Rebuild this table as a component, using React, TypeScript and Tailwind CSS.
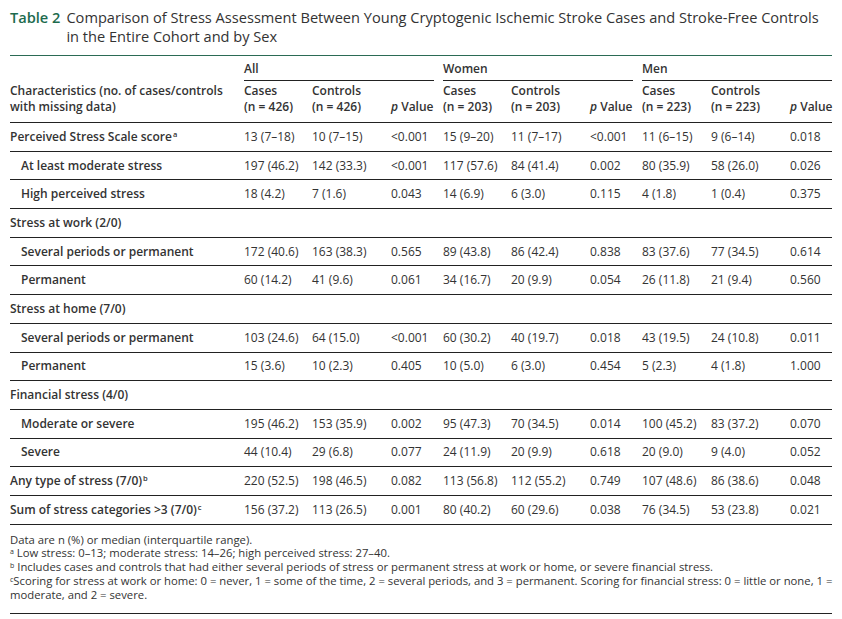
const cols = 'grid grid-cols-[234px_68px_79px_52px_68px_79px_52px_69px_79px_42px]';

type Row = {
  label: string;
  sup?: string;
  indent?: boolean;
  vals?: string[];
};

const rows: Row[] = [
  { label: 'Perceived Stress Scale score', sup: 'a', vals: ['13 (7–18)', '10 (7–15)', '<0.001', '15 (9–20)', '11 (7–17)', '<0.001', '11 (6–15)', '9 (6–14)', '0.018'] },
  { label: 'At least moderate stress', indent: true, vals: ['197 (46.2)', '142 (33.3)', '<0.001', '117 (57.6)', '84 (41.4)', '0.002', '80 (35.9)', '58 (26.0)', '0.026'] },
  { label: 'High perceived stress', indent: true, vals: ['18 (4.2)', '7 (1.6)', '0.043', '14 (6.9)', '6 (3.0)', '0.115', '4 (1.8)', '1 (0.4)', '0.375'] },
  { label: 'Stress at work (2/0)' },
  { label: 'Several periods or permanent', indent: true, vals: ['172 (40.6)', '163 (38.3)', '0.565', '89 (43.8)', '86 (42.4)', '0.838', '83 (37.6)', '77 (34.5)', '0.614'] },
  { label: 'Permanent', indent: true, vals: ['60 (14.2)', '41 (9.6)', '0.061', '34 (16.7)', '20 (9.9)', '0.054', '26 (11.8)', '21 (9.4)', '0.560'] },
  { label: 'Stress at home (7/0)' },
  { label: 'Several periods or permanent', indent: true, vals: ['103 (24.6)', '64 (15.0)', '<0.001', '60 (30.2)', '40 (19.7)', '0.018', '43 (19.5)', '24 (10.8)', '0.011'] },
  { label: 'Permanent', indent: true, vals: ['15 (3.6)', '10 (2.3)', '0.405', '10 (5.0)', '6 (3.0)', '0.454', '5 (2.3)', '4 (1.8)', '1.000'] },
  { label: 'Financial stress (4/0)' },
  { label: 'Moderate or severe', indent: true, vals: ['195 (46.2)', '153 (35.9)', '0.002', '95 (47.3)', '70 (34.5)', '0.014', '100 (45.2)', '83 (37.2)', '0.070'] },
  { label: 'Severe', indent: true, vals: ['44 (10.4)', '29 (6.8)', '0.077', '24 (11.9)', '20 (9.9)', '0.618', '20 (9.0)', '9 (4.0)', '0.052'] },
  { label: 'Any type of stress (7/0)', sup: 'b', vals: ['220 (52.5)', '198 (46.5)', '0.082', '113 (56.8)', '112 (55.2)', '0.749', '107 (48.6)', '86 (38.6)', '0.048'] },
  { label: 'Sum of stress categories >3 (7/0)', sup: 'c', vals: ['156 (37.2)', '113 (26.5)', '0.001', '80 (40.2)', '60 (29.6)', '0.038', '76 (34.5)', '53 (23.8)', '0.021'] },
];

function GroupHead({ name, last }: { name: string; last?: boolean }) {
  return (
    <div className={last ? 'col-span-3' : 'col-span-3 pr-[9px]'}>
      <div className="border-b border-[#222] pb-[3px] leading-[16px] font-semibold">{name}</div>
    </div>
  );
}

function SubHead({ n }: { n: string }) {
  return (
    <>
      <div className="font-semibold leading-[16px] whitespace-nowrap">
        Cases
        <br />({n})
      </div>
      <div className="font-semibold leading-[16px] whitespace-nowrap">
        Controls
        <br />({n})
      </div>
      <div className="font-semibold leading-[16px] self-end whitespace-nowrap">
        <i>p</i> Value
      </div>
    </>
  );
}

export default function App() {
  return (
    <div className="w-[842px] h-[619px] bg-white px-[10px] pt-[8px] text-[#333] font-['Open_Sans',sans-serif] text-[12px]">
      <h2 className="flex text-[14.6px] leading-[19px] pb-[9px]">
        <span className="font-semibold text-[#1d6b4e] pr-[6px] whitespace-nowrap">Table 2</span>
        <span>
          Comparison of Stress Assessment Between Young Cryptogenic Ischemic Stroke Cases and Stroke-Free Controls
          <br />
          in the Entire Cohort and by Sex
        </span>
      </h2>

      <div className="border-t-[1.5px] border-[#2b6b55]">
        <div className={`${cols} pt-[5px]`}>
          <div />
          <GroupHead name="All" />
          <GroupHead name="Women" />
          <GroupHead name="Men" last />
        </div>
        <div className={`${cols} pt-[2px] pb-[7px] border-b border-[#222]`}>
          <div className="font-semibold leading-[16px]">
            Characteristics (no. of cases/controls
            <br />
            with missing data)
          </div>
          <SubHead n="n = 426" />
          <SubHead n="n = 203" />
          <SubHead n="n = 223" />
        </div>

        {rows.map((r, i) => (
          <div key={i} className={`${cols} h-[28.7px] items-center border-b border-[#222]`}>
            <div className={`font-semibold whitespace-nowrap ${r.indent ? 'pl-[11px]' : ''}`}>
              {r.label}
              {r.sup && <sup className="text-[7.5px] leading-none ml-[1px]">{r.sup}</sup>}
            </div>
            {r.vals?.map((v, j) => (
              <div key={j} className="whitespace-nowrap">
                {v}
              </div>
            ))}
          </div>
        ))}
      </div>

      <div className="pt-[8px] pb-[11px] text-[11.3px] leading-[13.8px] border-b border-[#222]">
        <div>Data are n (%) or median (interquartile range).</div>
        <div>
          <sup className="text-[7px] leading-none">a</sup> Low stress: 0–13; moderate stress: 14–26; high perceived
          stress: 27–40.
        </div>
        <div>
          <sup className="text-[7px] leading-none">b</sup> Includes cases and controls that had either several periods
          of stress or permanent stress at work or home, or severe financial stress.
        </div>
        <div>
          <span className="whitespace-nowrap">
            <sup className="text-[7px] leading-none">c</sup>Scoring for stress at work or home: 0 = never, 1 = some of
            the time, 2 = several periods, and 3 = permanent. Scoring for financial stress: 0 = little or none, 1 =
          </span>
          <br />
          moderate, and 2 = severe.
        </div>
      </div>
    </div>
  );
}
